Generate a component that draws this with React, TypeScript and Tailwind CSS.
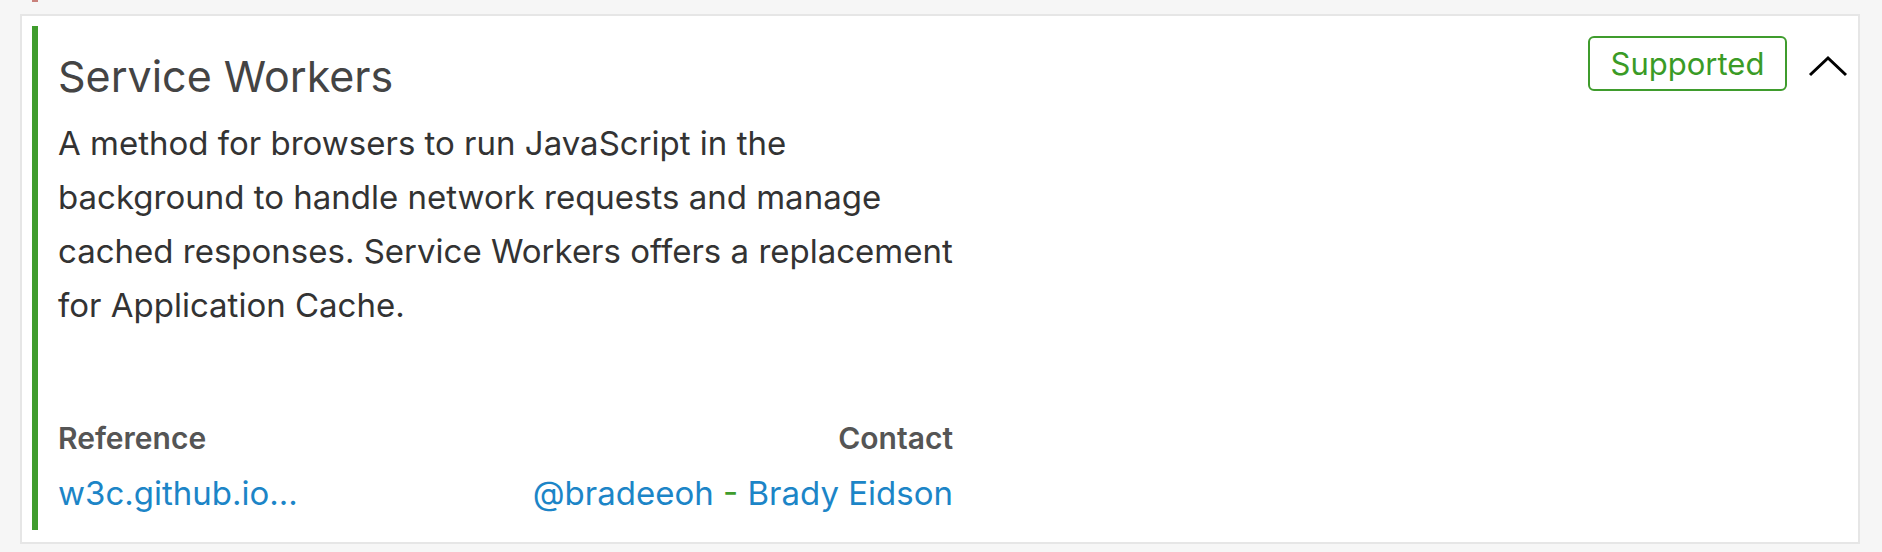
const font = { fontFamily: "Inter, 'Noto Sans', sans-serif" }

function StatusBadge({ label }: { label: string }) {
  return (
    <div className="h-[55px] w-[199px] flex items-center justify-center rounded-[6px] border-2 border-[#3f9c2d] text-[#3a9b26] text-[31px] leading-none">
      {label}
    </div>
  )
}

function Chevron() {
  return (
    <svg width="40" height="22" viewBox="0 0 40 22" className="mt-[19px]" fill="none">
      <polyline points="2,20 20,3 38,20" stroke="#000" strokeWidth="3" />
    </svg>
  )
}

export default function App() {
  return (
    <div className="min-h-[552px] bg-[#f6f6f6] pb-[8px]" style={font}>
      {/* tail of the card above */}
      <div className="ml-[32px] h-[2px] w-[6px] bg-[#c9817b]" />

      <div className="mt-[12px] ml-[20px] mr-[22px] border-2 border-[#e6e6e6] bg-white p-[10px] pb-[12px]">
        <div className="flex border-l-[6px] border-[#3f9c2d]">
          <div className="flex-1 flex pl-[20px] pt-[10px] pb-[4px]">
            <div className="w-[895px] flex flex-col">
              <h2 className="mt-[15px] text-[43px] leading-[1.2] text-[#444] font-normal">Service Workers</h2>
              <p className="mt-[13px] text-[33px] leading-[54px] text-[#333]">
                A method for browsers to run JavaScript in the
                <br />
                background to handle network requests and manage
                <br />
                cached responses. Service Workers offers a replacement
                <br />
                for Application Cache.
              </p>

              <div className="mt-[84px] flex justify-between">
                <div className="flex flex-col">
                  <span className="text-[30px] font-semibold text-[#555] leading-[44px]">Reference</span>
                  <a className="text-[33px] text-[#1c85c7] leading-[66px]">w3c.github.io...</a>
                </div>
                <div className="flex flex-col items-end">
                  <span className="text-[30px] font-semibold text-[#555] leading-[44px]">Contact</span>
                  <span className="text-[33px] leading-[66px]">
                    <a className="text-[#1c85c7]">@bradeeoh</a>
                    <span className="text-[#3f9c2d]"> - </span>
                    <a className="text-[#1c85c7]">Brady Eidson</a>
                  </span>
                </div>
              </div>
            </div>

            <div className="flex-1 flex justify-end items-start gap-[21px]">
              <StatusBadge label="Supported" />
              <Chevron />
            </div>
          </div>
        </div>
      </div>
    </div>
  )
}
